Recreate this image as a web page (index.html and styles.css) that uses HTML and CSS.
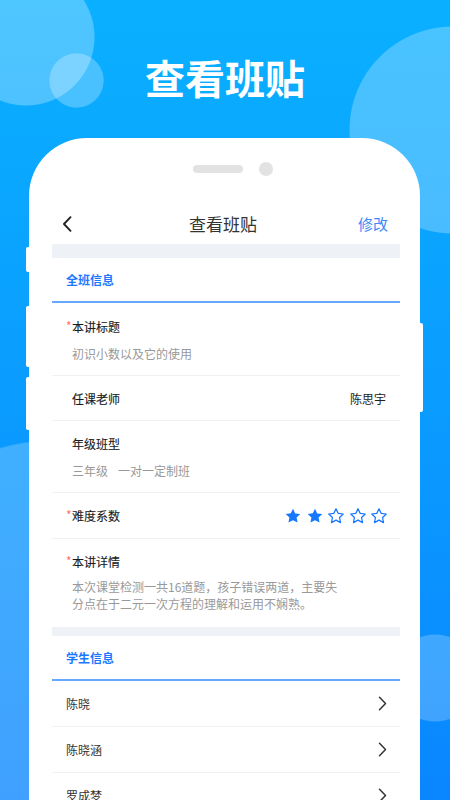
FILE: index.html
```html
<!DOCTYPE html>
<html lang="zh-CN">
<head>
<meta charset="utf-8">
<title>查看班贴</title>
<link rel="stylesheet" href="styles.css">
</head>
<body>
<div class="screen">
  <header class="hero">
    <h1 class="hero-title">查看班贴</h1>
  </header>
  <div class="phone">
    <span class="side-btn side-l1"></span>
    <span class="side-btn side-l2"></span>
    <span class="side-btn side-l3"></span>
    <span class="side-btn side-r1"></span>
    <div class="notch">
      <span class="speaker"></span>
      <span class="camera"></span>
    </div>
    <div class="app">
      <div class="navbar">
        <svg class="back" width="10" height="16" viewBox="0 0 10 16"><path d="M8.5 1.2L2 8l6.5 6.8" fill="none" stroke="#222" stroke-width="1.9" stroke-linecap="round" stroke-linejoin="round"/></svg>
        <div class="nav-title">查看班贴</div>
        <div class="nav-action">修改</div>
      </div>
      <div class="band band-lg"></div>
      <div class="sec-title">全班信息</div>
      <div class="row row-stack row-a">
        <div class="label"><span class="req">*</span>本讲标题</div>
        <div class="value">初识小数以及它的使用</div>
      </div>
      <div class="row row-line">
        <div class="label">任课老师</div>
        <div class="right-text">陈思宇</div>
      </div>
      <div class="row row-stack row-b">
        <div class="label">年级班型</div>
        <div class="value">三年级<span class="spacer"></span>一对一定制班</div>
      </div>
      <div class="row row-line row-stars">
        <div class="label"><span class="req">*</span>难度系数</div>
        <div class="stars">
          <svg class="star" viewBox="0 0 24 24"><path class="fill" d="M12 2.3l2.95 6.2 6.75.85-4.95 4.7 1.3 6.75L12 17.5l-6.05 3.3 1.3-6.75-4.95-4.7 6.75-.85z"/></svg>
          <svg class="star" viewBox="0 0 24 24"><path class="fill" d="M12 2.3l2.95 6.2 6.75.85-4.95 4.7 1.3 6.75L12 17.5l-6.05 3.3 1.3-6.75-4.95-4.7 6.75-.85z"/></svg>
          <svg class="star" viewBox="0 0 24 24"><path class="line" d="M12 2.3l2.95 6.2 6.75.85-4.95 4.7 1.3 6.75L12 17.5l-6.05 3.3 1.3-6.75-4.95-4.7 6.75-.85z"/></svg>
          <svg class="star" viewBox="0 0 24 24"><path class="line" d="M12 2.3l2.95 6.2 6.75.85-4.95 4.7 1.3 6.75L12 17.5l-6.05 3.3 1.3-6.75-4.95-4.7 6.75-.85z"/></svg>
          <svg class="star" viewBox="0 0 24 24"><path class="line" d="M12 2.3l2.95 6.2 6.75.85-4.95 4.7 1.3 6.75L12 17.5l-6.05 3.3 1.3-6.75-4.95-4.7 6.75-.85z"/></svg>
        </div>
      </div>
      <div class="row row-stack row-c">
        <div class="label"><span class="req">*</span>本讲详情</div>
        <div class="value detail">本次课堂检测一共16道题，孩子错误两道，主要失分点在于二元一次方程的理解和运用不娴熟。</div>
      </div>
      <div class="band band-sm"></div>
      <div class="sec-title">学生信息</div>
      <div class="student">
        <span class="name">陈晓</span>
        <svg class="chev" width="9" height="15" viewBox="0 0 9 15"><path d="M1.5 1.3L7.5 7.5l-6 6.2" fill="none" stroke="#333" stroke-width="1.5" stroke-linecap="round" stroke-linejoin="round"/></svg>
      </div>
      <div class="student">
        <span class="name">陈晓涵</span>
        <svg class="chev" width="9" height="15" viewBox="0 0 9 15"><path d="M1.5 1.3L7.5 7.5l-6 6.2" fill="none" stroke="#333" stroke-width="1.5" stroke-linecap="round" stroke-linejoin="round"/></svg>
      </div>
      <div class="student">
        <span class="name">罗成梦</span>
        <svg class="chev" width="9" height="15" viewBox="0 0 9 15"><path d="M1.5 1.3L7.5 7.5l-6 6.2" fill="none" stroke="#333" stroke-width="1.5" stroke-linecap="round" stroke-linejoin="round"/></svg>
      </div>
    </div>
  </div>
</div>
</body>
</html>
```
FILE: styles.css
```css
* { box-sizing: border-box; }

html, body {
  margin: 0;
  padding: 0;
}

body {
  width: 450px;
  height: 800px;
  overflow: hidden;
  font-family: "Noto Sans CJK SC", "Noto Sans", sans-serif;
}

.screen {
  width: 450px;
  height: 800px;
  overflow: hidden;
  background:
    radial-gradient(circle 27.5px at 76.5px 80.5px, rgba(255,255,255,0.26) 97%, rgba(255,255,255,0) 100%),
    radial-gradient(circle 69px at 26px 37px, rgba(255,255,255,0.28) 98.5%, rgba(255,255,255,0) 100%),
    radial-gradient(circle 104px at 453px 130px, rgba(255,255,255,0.26) 99%, rgba(255,255,255,0) 100%),
    radial-gradient(circle 44px at 435px 678px, rgba(255,255,255,0.22) 97.5%, rgba(255,255,255,0) 100%),
    radial-gradient(ellipse 250px 360px at 50px 800px, rgba(255,255,255,0.22) 99.5%, rgba(255,255,255,0) 100%),
    linear-gradient(180deg, #0ab0ff 0%, #0a9cff 50%, #0a86ff 100%);
}

.hero {
  height: 138px;
  padding-top: 57px;
}

.hero-title {
  margin: 0;
  text-align: center;
  color: #fff;
  font-size: 40px;
  line-height: 40px;
  font-weight: 700;
  letter-spacing: 0;
}

.phone {
  position: relative;
  margin-left: 29px;
  width: 391px;
  height: 700px;
  background: #fff;
  border-radius: 58px 58px 0 0;
  padding: 24px 20px 0 23px;
}

.side-btn {
  position: absolute;
  width: 5px;
  background: #fff;
  border-radius: 2px;
}
.side-l1 { left: -3px; top: 109px; height: 25px; }
.side-l2 { left: -3px; top: 168px; height: 61px; }
.side-l3 { left: -3px; top: 239px; height: 53px; }
.side-r1 { right: -3px; top: 185px; height: 89px; }

.notch {
  display: flex;
  align-items: center;
  height: 14px;
  margin-left: 141px;
  gap: 16px;
}

.speaker {
  width: 50px;
  height: 8px;
  border-radius: 4px;
  background: #e2e2e2;
}

.camera {
  width: 14px;
  height: 14px;
  border-radius: 50%;
  background: #e2e2e2;
}

.app {
  margin-top: 28px;
}

.navbar {
  height: 40px;
  display: flex;
  align-items: center;
  justify-content: space-between;
  padding: 0 12px 0 10px;
}

.back { display: block; }

.nav-title {
  font-size: 17px;
  color: #333;
  line-height: 20px;
  margin-left: 16px;
}

.nav-action {
  font-size: 15px;
  color: #3d8af7;
  line-height: 20px;
}

.band { background: #eef1f5; }
.band-lg { height: 14px; }
.band-sm { height: 9px; }

.sec-title {
  height: 45px;
  padding-left: 14px;
  display: flex;
  align-items: center;
  font-size: 12px;
  font-weight: 700;
  color: #1a78ff;
  border-bottom: 2px solid #66a8ff;
  padding-bottom: 1px;
}

.row {
  padding: 0 14px 0 20px;
  border-bottom: 1px solid #f0f2f6;
}

.row-line {
  height: 45px;
  display: flex;
  align-items: center;
  justify-content: space-between;
}

.row-stars { height: 46px; }

.row-stack { display: flex; flex-direction: column; }
.row-a { height: 73px; padding-top: 15px; gap: 10px; }
.row-b { height: 72px; padding-top: 14px; gap: 10px; }
.row-c { height: 88px; padding-top: 14px; gap: 8px; border-bottom: none; }

.label {
  position: relative;
  font-size: 12px;
  line-height: 17px;
  font-weight: 400;
  color: #1a1a1a;
  -webkit-text-stroke: 0.12px #1a1a1a;
}

.req {
  position: absolute;
  left: -6px;
  top: -1px;
  color: #ff6f6f;
  -webkit-text-stroke: 0;
  font-size: 12px;
  font-weight: 400;
  line-height: 17px;
}

.value {
  font-size: 12px;
  line-height: 17px;
  color: #999;
}

.spacer {
  display: inline-block;
  width: 10px;
}

.detail {
  max-width: 272px;
}

.right-text {
  font-size: 12px;
  line-height: 17px;
  color: #222;
}

.stars {
  display: flex;
  gap: 3.5px;
  margin-right: -2px;
}

.star {
  width: 18px;
  height: 18px;
  display: block;
}

.star .fill { fill: #1677ff; }
.star .line { fill: none; stroke: #1677ff; stroke-width: 1.6; stroke-linejoin: round; }

.student {
  height: 46px;
  padding: 0 13px 0 14px;
  display: flex;
  align-items: center;
  justify-content: space-between;
  border-bottom: 1px solid #f0f2f6;
}

.name {
  font-size: 12px;
  line-height: 17px;
  color: #333;
}

.chev { display: block; }
```
